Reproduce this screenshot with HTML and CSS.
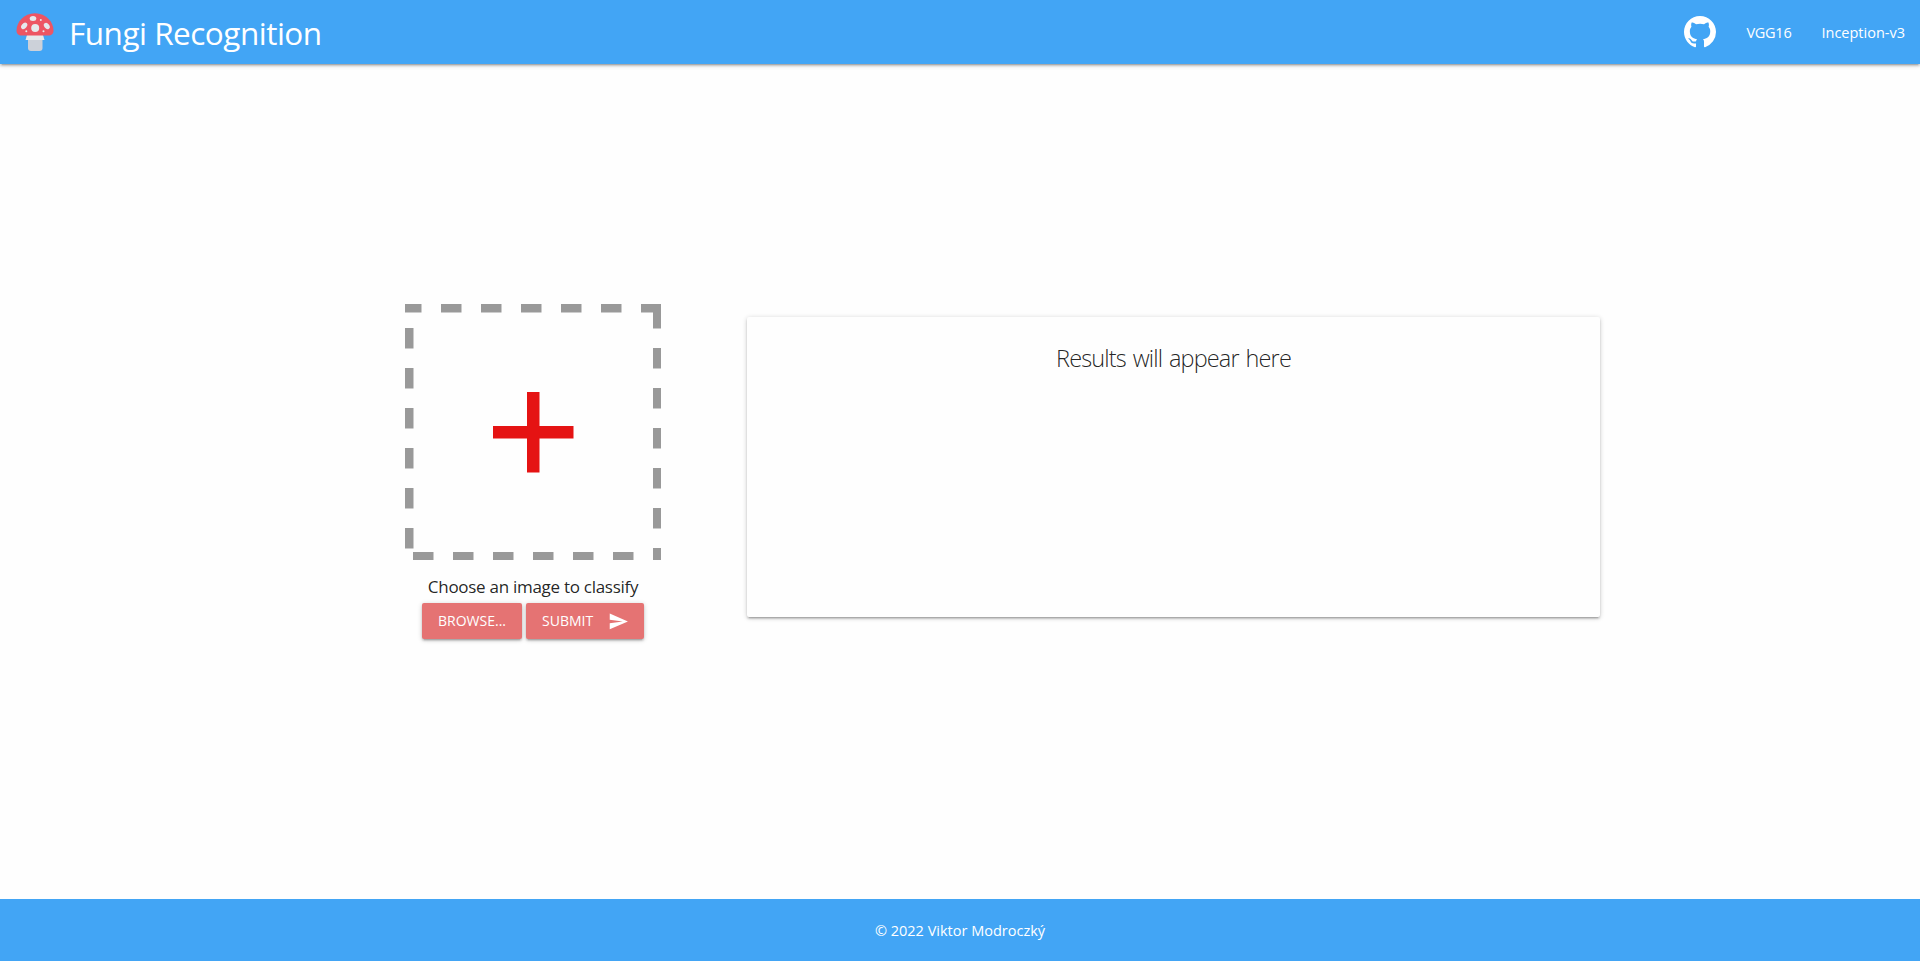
FILE: index.html
```html
<!DOCTYPE html>
<html lang="en">
<head>
<meta charset="utf-8">
<title>Fungi Recognition</title>
<link rel="stylesheet" href="styles.css">
</head>
<body>
<nav class="navbar">
  <a class="brand">
    <svg class="brand-logo" viewBox="0 0 38 38">
      <path fill="#e6e9ed" d="M11 22h16l1.500 5h-19z"/>
      <path fill="#ccd1d9" d="M12 27h14.500v8q0 3-3 3h-8.500q-3 0-3-3z"/>
      <path fill="#ed5564" d="M19 .3C8 .3.5 9 .5 17.500c0 3.500 2 5 5 5h27c3 0 5-1.500 5-5C37.500 9 30 .3 19 .3z"/>
      <g fill="#e6e9ed">
        <ellipse cx="17" cy="5.600" rx="3.300" ry="2.500"/>
        <circle cx="19.200" cy="15" r="4"/>
        <ellipse cx="8.200" cy="12.800" rx="2.500" ry="3.700" transform="rotate(40 8.200 12.800)"/>
        <ellipse cx="30.800" cy="13" rx="2.500" ry="3.500" transform="rotate(-38 30.800 13)"/>
        <circle cx="24.800" cy="7" r="1"/>
        <circle cx="10.300" cy="18.300" r="1"/>
        <circle cx="27.500" cy="18.300" r="1"/>
      </g>
    </svg>
    <span class="brand-name">Fungi Recognition</span>
  </a>
  <div class="links">
    <svg class="github" viewBox="0 0 16 16"><path fill="#fff" d="M8 0C3.580 0 0 3.580 0 8c0 3.540 2.290 6.530 5.470 7.590.4.070.55-.17.55-.38 0-.19-.01-.82-.01-1.490-2.010.37-2.530-.49-2.690-.94-.09-.23-.48-.94-.82-1.130-.28-.15-.68-.52-.01-.53.63-.01 1.080.58 1.230.82.72 1.210 1.870.87 2.330.66.07-.52.28-.87.51-1.070-1.780-.2-3.640-.89-3.640-3.950 0-.87.31-1.590.82-2.150-.08-.2-.36-1.020.08-2.120 0 0 .67-.21 2.200.82.64-.18 1.320-.27 2-.27s1.360.09 2 .27c1.530-1.040 2.200-.82 2.200-.82.44 1.100.16 1.920.08 2.120.51.56.82 1.270.82 2.150 0 3.070-1.870 3.750-3.650 3.950.29.25.54.73.54 1.480 0 1.070-.01 1.930-.01 2.200 0 .21.15.46.55.38A8.010 8.010 0 0 0 16 8c0-4.420-3.580-8-8-8z"/></svg>
    <a class="link link-vgg">VGG16</a>
    <a class="link link-inception">Inception-v3</a>
  </div>
</nav>
<main class="content">
  <section class="picker">
    <svg class="preview" viewBox="0 0 256 256" fill="none">
      <g stroke="#999">
        <path stroke-width="8.500" stroke-dasharray="20.500 19.500" stroke-dashoffset="4" d="M0 4.250H256"/>
        <path stroke-width="8.500" stroke-dasharray="20.500 19.500" d="M4.250 24V250"/>
        <path stroke-width="8" stroke-dasharray="20.500 19.500" d="M8 252H246"/>
        <path stroke-width="8" stroke-dasharray="20.500 19.500" d="M252 4V256"/>
      </g>
      <path fill="#e51313" d="M122 88h12.500v34h34v12.500h-34v34h-12.500v-34h-34v-12.500h34z"/>
    </svg>
    <p class="prompt">Choose an image to classify</p>
    <div class="actions">
      <button class="btn btn-browse">BROWSE...</button>
      <button class="btn btn-submit"><span>SUBMIT</span><svg class="send" viewBox="0 0 24 24"><path fill="#fff" d="M2.010 21L23 12 2.010 3 2 10l15 2-15 2z"/></svg></button>
    </div>
  </section>
  <section class="card"><h5 class="result">Results will appear here</h5></section>
</main>
<footer class="footer"><span class="copyright">© 2022 Viktor Modroczký</span></footer>
</body>
</html>
```
FILE: styles.css
```css
* { box-sizing: border-box; }
body {
  margin: 0;
  height: 961px;
  display: flex;
  flex-direction: column;
  background: #fefefe;
  color: rgba(0, 0, 0, .87);
  font-family: "Open Sans", "Noto Sans", sans-serif;
}
.navbar, .btn, .card {
  box-shadow: 0 2px 2px 0 rgba(0,0,0,.14), 0 3px 1px -2px rgba(0,0,0,.12), 0 1px 5px 0 rgba(0,0,0,.2);
}
.navbar {
  height: 64px;
  flex: none;
  display: flex;
  justify-content: space-between;
  align-items: center;
  padding: 0 15px 0 16px;
  background: #42a5f5;
  color: #fff;
}
.brand { display: flex; align-items: center; gap: 15px; }
.brand-logo { width: 38px; height: 38px; }
.brand-name { padding-top: 2px; font-size: 31.500px; line-height: 62px; letter-spacing: -.5px; white-space: nowrap; }
.links { display: flex; align-items: center; font-size: 14.500px; }
.github { width: 32px; height: 32px; margin-right: 30px; }
.link { padding-top: 2px; line-height: 62px; white-space: nowrap; letter-spacing: 0; }
.link-vgg { margin-right: 30px; letter-spacing: -.25px; }
.content {
  flex: 1;
  display: flex;
  align-items: flex-start;
  padding-left: 405px;
}
.picker {
  width: 256px;
  margin-top: 240px;
  display: flex;
  flex-direction: column;
  align-items: center;
}
.preview { width: 256px; height: 256px; }
.prompt { margin: 12px 0 1px; font-size: 17px; line-height: 30px; letter-spacing: -.28px; white-space: nowrap; }
.actions { display: flex; gap: 4px; }
.btn {
  height: 36px;
  display: flex;
  align-items: center;
  justify-content: center;
  border: 0;
  padding: 0;
  border-radius: 2px;
  background: #e57373;
  color: #fff;
  font: 14px/36px "Open Sans", "Noto Sans", sans-serif;
}
.btn-browse { width: 100px; }
.btn-submit { width: 118px; gap: 15px; padding-left: 1px; }
.send { width: 20.800px; height: 20.800px; }
.card {
  width: 853px;
  height: 300px;
  margin: 253px 0 0 86px;
  border-radius: 2px;
  background: #fefefe;
  text-align: center;
}
.result { margin: 26px 0 0; font-size: 23.500px; line-height: 30px; font-weight: 300; letter-spacing: -.85px; word-spacing: 1.500px; }
.footer {
  height: 62px;
  flex: none;
  display: flex;
  align-items: center;
  justify-content: center;
  background: #42a5f5;
  color: #fff;
  font-size: 14.500px;
}
```
